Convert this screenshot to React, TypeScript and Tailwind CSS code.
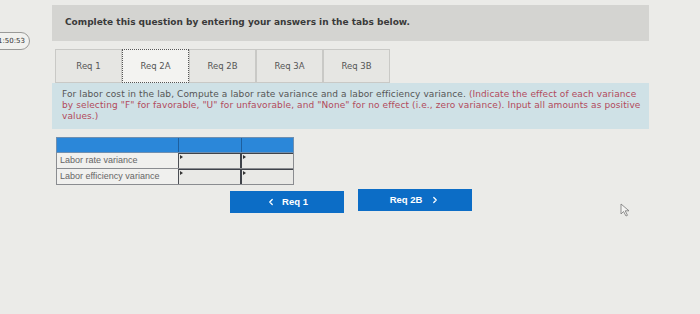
import { ChevronLeft, ChevronRight } from 'lucide-react';

const tabs = ['Req 1', 'Req 2A', 'Req 2B', 'Req 3A', 'Req 3B'];

const rows = ['Labor rate variance', 'Labor efficiency variance'];

const App = () => {
  return (
    <div className="relative w-[700px] h-[314px] overflow-hidden bg-[#ebebe8] flex font-['DejaVu_Sans',sans-serif]">
      {/* timer */}
      <div className="w-[52px] shrink-0">
        <div className="mt-[32px] -ml-[12px] w-[42px] h-[18px] rounded-full border border-[#9a9a98] bg-[#f1f1ee] flex items-center justify-end pr-[4px] text-[7px] text-[#333]">
          1:50:53
        </div>
      </div>

      <div className="w-[597px] flex flex-col">
        {/* header */}
        <div className="mt-[5px] h-[36px] bg-[#d4d4d1] flex items-center pl-[13px] text-[9px] font-bold text-[#3a3a3a]">
          Complete this question by entering your answers in the tabs below.
        </div>

        {/* tabs */}
        <div className="mt-[8px] h-[34px] flex pl-[3px]">
          {tabs.map((t) => (
            <div
              key={t}
              className={`w-[67px] h-full flex items-center justify-center text-[8.5px] text-[#555] ${
                t === 'Req 2A'
                  ? 'bg-[#f3f3f1] border border-dotted border-[#555]'
                  : 'bg-[#e6e6e3] border border-[#c9c9c6]'
              }`}
            >
              {t}
            </div>
          ))}
        </div>

        {/* instructions */}
        <p className="h-[46px] bg-[#cfe1e6] pl-[10px] pr-[6px] pt-[6px] text-[9px] tracking-[0.1px] leading-[11px] text-[#555]">
          For labor cost in the lab, Compute a labor rate variance and a labor efficiency variance.{' '}
          <span className="text-[#b24a5c]">
            (Indicate the effect of each variance by selecting "F" for favorable, "U" for unfavorable, and "None" for no
            effect (i.e., zero variance). Input all amounts as positive values.)
          </span>
        </p>

        {/* table */}
        <div className="mt-[8px] ml-[4px] w-[238px] font-['Liberation_Sans',sans-serif]">
          <div className="flex h-[16px] bg-[#2b87d9] border border-[#6f8fb0]">
            <div className="w-[122px] border-r border-[#1d5f9e]" />
            <div className="w-[63px] border-r border-[#1d5f9e]" />
            <div className="flex-1" />
          </div>
          {rows.map((r) => (
            <div key={r} className="flex h-[16px] border-x border-b border-[#8a8c90]">
              <div className="w-[122px] bg-[#f0f0ee] border-r border-[#4c4f55] flex items-center pl-[3px] text-[9px] text-[#666]">
                {r}
              </div>
              <div className="relative w-[63px] bg-[#e9e9e6] border-r-2 border-[#3f434a] border-t border-t-[#3f434a]">
                <span className="absolute left-[1px] top-[1px] w-0 h-0 border-y-[2px] border-y-transparent border-l-[3px] border-l-[#333]" />
              </div>
              <div className="relative flex-1 bg-[#e9e9e6] border-t border-[#3f434a]">
                <span className="absolute left-[1px] top-[1px] w-0 h-0 border-y-[2px] border-y-transparent border-l-[3px] border-l-[#333]" />
              </div>
            </div>
          ))}
        </div>

        {/* nav buttons */}
        <div className="mt-[5px] ml-[178px] flex gap-[14px] font-['Liberation_Sans',sans-serif]">
          <button className="w-[114px] h-[22px] bg-[#0c6dc6] text-white text-[9.5px] font-bold flex items-center justify-center gap-[6px] mt-[1px]">
            <ChevronLeft size={10} strokeWidth={3} />
            Req 1
          </button>
          <button className="w-[114px] h-[22px] bg-[#0c6dc6] text-white text-[9.5px] font-bold flex items-center justify-center gap-[8px] -mt-[1px]">
            Req 2B
            <ChevronRight size={10} strokeWidth={3} />
          </button>
        </div>
      </div>

      {/* mouse cursor */}
      <svg className="absolute left-[620px] top-[203px]" width="12" height="14" viewBox="0 0 12 14">
        <path d="M1 1 L1 11 L3.5 8.5 L6 13 L7.5 12.3 L5.2 7.8 L9 7.8 Z" fill="#f4f4f2" stroke="#777" strokeWidth="0.8" />
      </svg>
    </div>
  );
};

export default App;
